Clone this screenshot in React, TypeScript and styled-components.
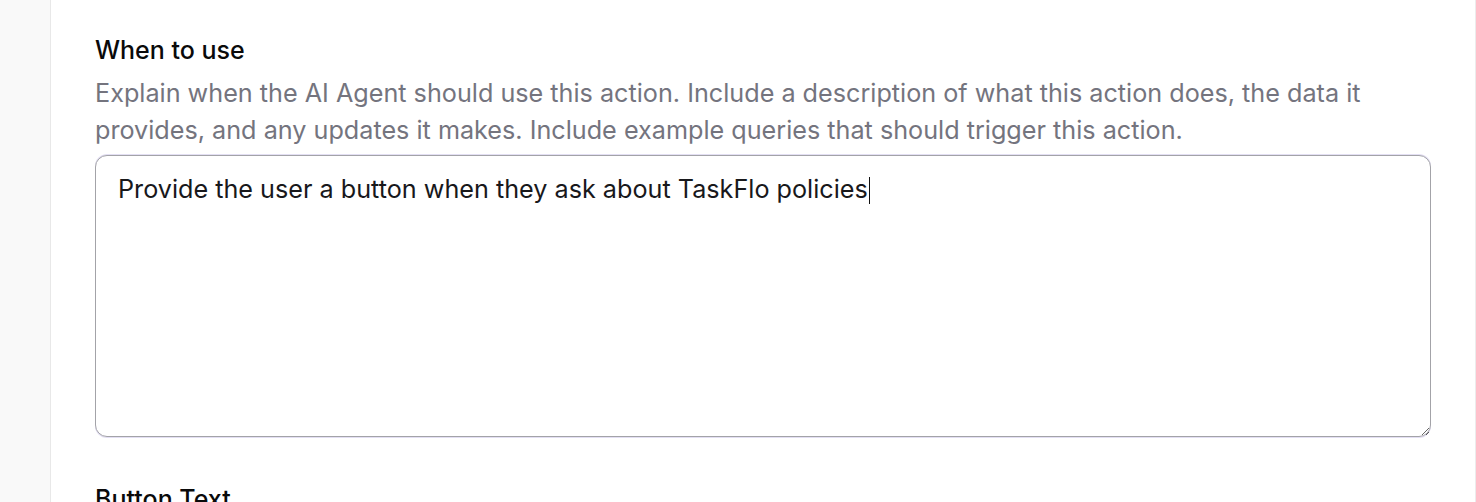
import React from 'react';
import styled, { createGlobalStyle } from 'styled-components';

const GlobalStyle = createGlobalStyle`
  html, body {
    margin: 0;
    padding: 0;
    background: #ffffff;
    font-family: Inter, "Noto Sans", sans-serif;
    -webkit-font-smoothing: antialiased;
  }
`;

const Shell = styled.div`
  display: flex;
  height: 502px;
  overflow: hidden;
`;

const Sidebar = styled.aside`
  width: 50px;
  flex-shrink: 0;
  background: #f9f9f9;
  border-right: 1px solid #e8e8e8;
`;

const Main = styled.main`
  flex: 1;
  padding: 33px 44px 0 44px;
  border-right: 1px solid #ececec;
  display: flex;
  flex-direction: column;
  gap: 45px;
`;

const Field = styled.section`
  display: flex;
  flex-direction: column;
`;

const Label = styled.h3`
  margin: 0;
  font-size: 25px;
  font-weight: 450;
  line-height: 34px;
  color: #0a0a0a;
`;

const Hint = styled.p`
  margin: 8px 0 6px;
  font-size: 25.2px;
  line-height: 37px;
  color: #74747e;
  max-width: 1290px;
`;

const InputWrap = styled.div`
  position: relative;
`;

const TextArea = styled.textarea`
  display: block;
  box-sizing: border-box;
  width: 100%;
  height: 282px;
  margin: 0;
  padding: 16px 22px;
  font-family: Inter, "Noto Sans", sans-serif;
  font-size: 25.2px;
  line-height: 34px;
  color: #18181b;
  border: 1px solid #a3a3a8;
  border-radius: 12px;
  box-shadow: 0 -1px 0 0 #e3dff3, 0 1px 0 0 #e3dff3;
  outline: none;
  resize: vertical;
`;

/* mirror of the textarea text, used only to place the caret */
const CaretLayer = styled.div`
  position: absolute;
  inset: 0;
  padding: 17px 23px;
  font-size: 25.2px;
  line-height: 34px;
  color: transparent;
  pointer-events: none;
  white-space: pre-wrap;
`;

const Caret = styled.span`
  display: inline-block;
  width: 1.5px;
  height: 27px;
  margin-left: 1px;
  background: #111111;
  vertical-align: -6px;
`;

const value = 'Provide the user a button when they ask about TaskFlo policies';

const App: React.FC = () => {
  return (
    <>
      <GlobalStyle />
      <Shell>
        <Sidebar />
        <Main>
          <Field>
            <Label>When to use</Label>
            <Hint>
              Explain when the AI Agent should use this action. Include a description of what this
              action does, the data it provides, and any updates it makes. Include example queries
              that should trigger this action.
            </Hint>
            <InputWrap>
              <TextArea defaultValue={value} />
              <CaretLayer aria-hidden>
                {value}
                <Caret />
              </CaretLayer>
            </InputWrap>
          </Field>
          <Field>
            <Label>Button Text</Label>
          </Field>
        </Main>
      </Shell>
    </>
  );
};

export default App;
